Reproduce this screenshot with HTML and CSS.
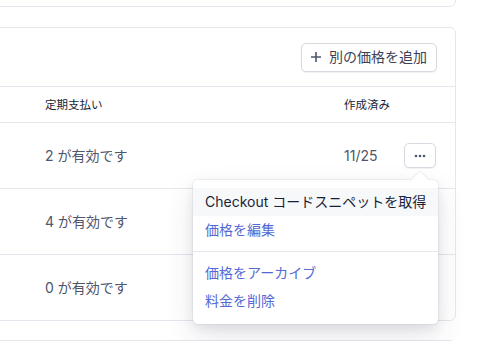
FILE: index.html
```html
<!DOCTYPE html>
<html lang="ja">
<head>
  <meta charset="UTF-8" />
  <meta name="viewport" content="width=device-width, initial-scale=1" />
  <title>価格</title>
  <link rel="stylesheet" href="styles.css">
</head>
<body>
  <div class="page">
    <div class="card card-prev"></div>

    <div class="card">
      <div class="card-head">
        <button class="btn">
          <svg class="plus" viewBox="0 0 12 12" width="12" height="12">
            <path d="M6 1v10M1 6h10" stroke="#4f566b" stroke-width="1.6" fill="none"/>
          </svg>
          別の価格を追加
        </button>
      </div>

      <div class="row row-head">
        <div class="col-main">定期支払い</div>
        <div class="col-date">作成済み</div>
        <div class="col-act"></div>
      </div>

      <div class="row">
        <div class="col-main">2 が有効です</div>
        <div class="col-date">11/25</div>
        <div class="col-act">
          <div class="more-wrap">
            <button class="more">
              <svg viewBox="0 0 12 4" width="12" height="4">
                <circle cx="2" cy="2" r="1.3" fill="#4f566b"/>
                <circle cx="6" cy="2" r="1.3" fill="#4f566b"/>
                <circle cx="10" cy="2" r="1.3" fill="#4f566b"/>
              </svg>
            </button>
            <!-- メニュー -->
            <div class="menu">
              <div class="menu-item active">Checkout コードスニペットを取得</div>
              <div class="menu-item link">価格を編集</div>
              <div class="menu-sep"></div>
              <div class="menu-item link">価格をアーカイブ</div>
              <div class="menu-item link">料金を削除</div>
            </div>
          </div>
        </div>
      </div>

      <div class="row">
        <div class="col-main">4 が有効です</div>
        <div class="col-date"></div>
        <div class="col-act"></div>
      </div>

      <div class="row">
        <div class="col-main">0 が有効です</div>
        <div class="col-date"></div>
        <div class="col-act"></div>
      </div>
    </div>

    <div class="card card-next"></div>
  </div>
</body>
</html>
```

FILE: styles.css
```css
* {
  margin: 0;
  padding: 0;
  box-sizing: border-box;
}
body {
  background: #fff;
  font-family: "Inter", "Noto Sans CJK JP", sans-serif;
  color: #4f566b;
  overflow: hidden;
}
.page {
  width: 496px;
  margin-left: -40px;
}
.card {
  border: 1px solid #e3e8ee;
  border-radius: 6px;
  background: #fff;
}
.card-prev {
  height: 40px;
  margin-top: -33px;
}
.card + .card {
  margin-top: 20px;
}
.card-next {
  height: 60px;
  margin-top: 19px !important;
}
.card-head {
  height: 58px;
  display: flex;
  align-items: center;
  justify-content: flex-end;
  padding-right: 18px;
}
.btn {
  display: flex;
  align-items: center;
  height: 29px;
  padding: 0 9px 0 8px;
  border: 1px solid #d5dbe1;
  border-radius: 5px;
  background: #fff;
  box-shadow: 0 1px 1px rgba(0, 0, 0, 0.06);
  font-family: inherit;
  font-size: 14px;
  color: #3c4257;
  line-height: 1;
}
.plus {
  margin-right: 7px;
}
.row {
  display: flex;
  align-items: center;
  height: 66px;
  border-top: 1px solid #e3e8ee;
  padding-left: 84px;
  padding-right: 19px;
  font-size: 14px;
  line-height: 20px;
}
.row-head {
  height: 36px;
  font-size: 11.5px;
  color: #1a1f36;
}
.col-main {
  flex: 1;
}
.col-date {
  width: 60px;
}
.col-act {
  width: 32px;
}
.more-wrap {
  position: relative;
}
.more {
  display: flex;
  align-items: center;
  justify-content: center;
  width: 32px;
  height: 25px;
  border: 1px solid #d5dbe1;
  border-radius: 5px;
  background: #fff;
  box-shadow: 0 1px 1px rgba(0, 0, 0, 0.06);
}
.menu {
  position: absolute;
  top: 37px;
  right: -2px;
  width: 245px;
  padding: 8px 0 9px;
  background: #fff;
  border-radius: 5px;
  box-shadow: 0 0 0 1px rgba(136, 152, 170, 0.1),
              0 12px 30px rgba(49, 49, 93, 0.12),
              0 4px 12px rgba(0, 0, 0, 0.08);
  z-index: 2;
}
/* 上向きの矢印 */
.menu::before {
  content: "";
  position: absolute;
  top: -6px;
  right: 12px;
  width: 12px;
  height: 12px;
  background: #fff;
  transform: rotate(45deg);
  box-shadow: -1px -1px 1px rgba(136, 152, 170, 0.12);
}
.menu-item {
  position: relative;
  height: 28px;
  line-height: 28px;
  padding-left: 12px;
  font-size: 14px;
  white-space: nowrap;
}
.menu-item.active {
  background: #f6f8fa;
  color: #1a1f36;
}
.menu-item.link {
  color: #5469d4;
}
.menu-sep {
  height: 1px;
  margin: 7px 0;
  background: #e3e8ee;
}
```
